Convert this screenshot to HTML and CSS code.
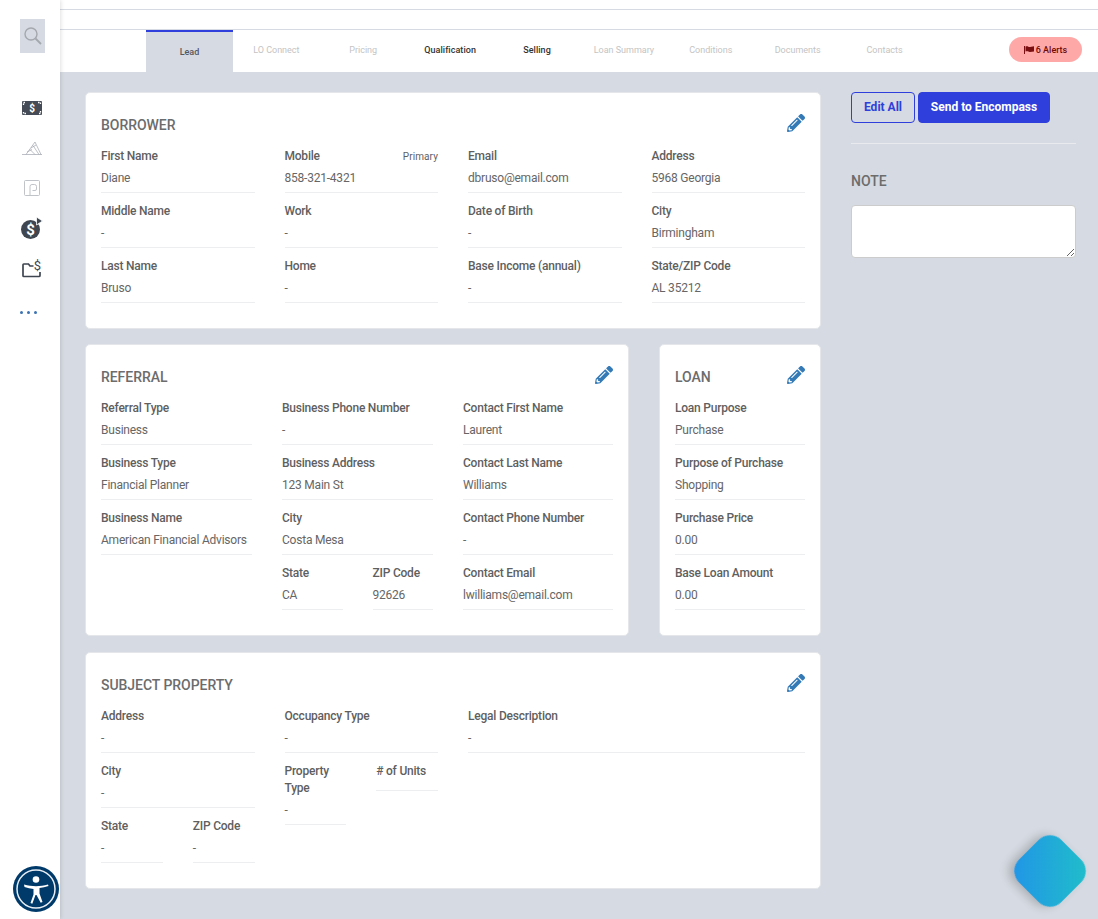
FILE: index.html
```html
<!DOCTYPE html>
<html lang="en">
<head>
<meta charset="utf-8">
<title>Lead</title>
<link rel="stylesheet" href="styles.css">
</head>
<body>
<svg class="defs" width="0" height="0" aria-hidden="true">
  <symbol id="pencil" viewBox="0 0 512 512"><path d="M497.9 142.1l-46.1 46.1c-4.7 4.7-12.3 4.7-17 0l-111-111c-4.7-4.7-4.7-12.3 0-17l46.1-46.1c18.7-18.7 49.1-18.7 67.9 0l60.1 60.1c18.8 18.7 18.8 49.1 0 67.9zM284.2 99.8L21.6 362.4.4 483.9c-2.9 16.4 11.4 30.6 27.8 27.8l121.5-21.3 262.6-262.6c4.7-4.7 4.7-12.3 0-17l-111-111c-4.8-4.7-12.4-4.7-17.1 0zM124.1 339.9c-5.5-5.5-5.5-14.3 0-19.8l154-154c5.5-5.5 14.3-5.5 19.8 0s5.5 14.3 0 19.8l-154 154c-5.5 5.5-14.3 5.5-19.8 0zM88 424h48v36.3l-64.5 11.3-31.1-31.1L51.7 376H88v48z"/></symbol>
</svg>
<div class="app">
  <aside class="sidebar">
    <div class="search">
      <svg width="18" height="18" viewBox="0 0 18 18" fill="none" stroke="#a4a8ae" stroke-width="1.4"><circle cx="7" cy="7" r="6"/><path d="M11.500 11.500l5.500 5.500" stroke-width="1.800"/></svg>
    </div>
    <div class="nav-icon">
      <svg width="20" height="14" viewBox="0 0 20 14"><rect width="20" height="14" rx="1" fill="#454c57"/><path d="M1.500 4V1.500H4M16 1.500h2.500V4M18.500 10v2.500H16M4 12.500H1.500V10" fill="none" stroke="#fff" stroke-width="1.300" stroke-dasharray="1.500 1"/><text x="10" y="10.800" text-anchor="middle" class="icon-text" fill="#fff" font-size="10">$</text></svg>
    </div>
    <div class="nav-icon">
      <svg width="20" height="14" viewBox="0 0 20 14" fill="none" stroke="#a0a5ad" stroke-width=".7"><path d="M0 13.500h20M4 13.500L13 1l6 12.500M8 8.500l5 5M11 4.500l6 9M5 11l5-2.500M9 7l5-3"/></svg>
    </div>
    <div class="nav-icon">
      <svg width="16" height="16" viewBox="0 0 16 16" fill="none" stroke="#b9bcc2" stroke-width=".9"><rect x=".5" y=".5" width="15" height="15" rx="1"/><path d="M6 15V6.500a2 2 0 0 1 2-2h2.500a2 2 0 0 1 2 2V9a1.500 1.500 0 0 1-1.500 1.500H8.500"/></svg>
    </div>
    <div class="nav-icon">
      <svg width="22" height="22" viewBox="0 0 22 22"><circle cx="9.500" cy="12.500" r="9.500" fill="#3f4650"/><path d="M15.500 0l6 4-6 4z" fill="#3f4650" stroke="#fff" stroke-width=".8"/><text x="9.500" y="17.500" text-anchor="middle" class="icon-text" fill="#fff" font-size="15">$</text></svg>
    </div>
    <div class="nav-icon">
      <svg width="20" height="19" viewBox="0 0 20 19" fill="none" stroke="#3f4650" stroke-width="1.700"><path d="M11.500 7H8L6.500 5H1.800a.8.800 0 0 0-.8.800v10.900c0 .4.400.8.800.8H17a1 1 0 0 0 1-1V13"/><text x="15.500" y="11" text-anchor="middle" class="icon-text thin" fill="#3f4650" stroke="none" font-size="13">$</text></svg>
    </div>
    <div class="nav-icon dots"><span></span><span></span><span></span></div>
  </aside>

  <div class="content">
    <div class="top-strip"></div>
    <div class="tabs">
      <a class="tab current">Lead</a>
      <a class="tab off">LO Connect</a>
      <a class="tab off">Pricing</a>
      <a class="tab on">Qualification</a>
      <a class="tab on">Selling</a>
      <a class="tab off">Loan Summary</a>
      <a class="tab off">Conditions</a>
      <a class="tab off">Documents</a>
      <a class="tab off">Contacts</a>
      <span class="alerts">
        <svg width="10" height="8" viewBox="0 0 10 8"><path d="M0 0h1v8H0zM1.500.500c2.500-.8 3 .8 4.500.5L10 .300v5.200l-4 .500c-1.500.2-2-1.200-4.500-.5z" fill="#7a0f12"/></svg>
        6 Alerts
      </span>
    </div>

    <main class="page">
      <div class="cards">
        <section class="card">
          <header class="card-head"><h2 class="title">BORROWER</h2><svg class="pencil"><use href="#pencil"/></svg></header>
          <div class="cols cols-4">
            <div>
              <div class="field"><div class="label">First Name</div><div class="value">Diane</div></div>
              <div class="field"><div class="label">Middle Name</div><div class="value">-</div></div>
              <div class="field"><div class="label">Last Name</div><div class="value">Bruso</div></div>
            </div>
            <div>
              <div class="field"><div class="label split">Mobile<span class="primary">Primary</span></div><div class="value">858-321-4321</div></div>
              <div class="field"><div class="label">Work</div><div class="value">-</div></div>
              <div class="field"><div class="label">Home</div><div class="value">-</div></div>
            </div>
            <div>
              <div class="field"><div class="label">Email</div><div class="value">dbruso@email.com</div></div>
              <div class="field"><div class="label">Date of Birth</div><div class="value">-</div></div>
              <div class="field"><div class="label">Base Income (annual)</div><div class="value">-</div></div>
            </div>
            <div>
              <div class="field"><div class="label">Address</div><div class="value">5968 Georgia</div></div>
              <div class="field"><div class="label">City</div><div class="value">Birmingham</div></div>
              <div class="field"><div class="label">State/ZIP Code</div><div class="value">AL 35212</div></div>
            </div>
          </div>
        </section>

        <div class="card-row">
          <section class="card">
            <header class="card-head"><h2 class="title">REFERRAL</h2><svg class="pencil"><use href="#pencil"/></svg></header>
            <div class="cols cols-3">
              <div>
                <div class="field"><div class="label">Referral Type</div><div class="value">Business</div></div>
                <div class="field"><div class="label">Business Type</div><div class="value">Financial Planner</div></div>
                <div class="field"><div class="label">Business Name</div><div class="value">American Financial Advisors</div></div>
              </div>
              <div>
                <div class="field"><div class="label">Business Phone Number</div><div class="value">-</div></div>
                <div class="field"><div class="label">Business Address</div><div class="value">123 Main St</div></div>
                <div class="field"><div class="label">City</div><div class="value">Costa Mesa</div></div>
                <div class="pair">
                  <div class="field"><div class="label">State</div><div class="value">CA</div></div>
                  <div class="field"><div class="label">ZIP Code</div><div class="value">92626</div></div>
                </div>
              </div>
              <div>
                <div class="field"><div class="label">Contact First Name</div><div class="value">Laurent</div></div>
                <div class="field"><div class="label">Contact Last Name</div><div class="value">Williams</div></div>
                <div class="field"><div class="label">Contact Phone Number</div><div class="value">-</div></div>
                <div class="field"><div class="label">Contact Email</div><div class="value">lwilliams@email.com</div></div>
              </div>
            </div>
          </section>
          <section class="card">
            <header class="card-head"><h2 class="title">LOAN</h2><svg class="pencil"><use href="#pencil"/></svg></header>
            <div class="field"><div class="label">Loan Purpose</div><div class="value">Purchase</div></div>
            <div class="field"><div class="label">Purpose of Purchase</div><div class="value">Shopping</div></div>
            <div class="field"><div class="label">Purchase Price</div><div class="value">0.00</div></div>
            <div class="field"><div class="label">Base Loan Amount</div><div class="value">0.00</div></div>
          </section>
        </div>

        <section class="card">
          <header class="card-head"><h2 class="title">SUBJECT PROPERTY</h2><svg class="pencil"><use href="#pencil"/></svg></header>
          <div class="cols cols-4">
            <div>
              <div class="field"><div class="label">Address</div><div class="value">-</div></div>
              <div class="field"><div class="label">City</div><div class="value">-</div></div>
              <div class="pair">
                <div class="field"><div class="label">State</div><div class="value">-</div></div>
                <div class="field"><div class="label">ZIP Code</div><div class="value">-</div></div>
              </div>
            </div>
            <div>
              <div class="field"><div class="label">Occupancy Type</div><div class="value">-</div></div>
              <div class="pair top">
                <div class="field"><div class="label">Property Type</div><div class="value">-</div></div>
                <div class="field"><div class="label"># of Units</div></div>
              </div>
            </div>
            <div class="span-2">
              <div class="field"><div class="label">Legal Description</div><div class="value">-</div></div>
            </div>
          </div>
        </section>
      </div>

      <aside class="side">
        <div class="actions">
          <button class="btn outline" type="button">Edit All</button>
          <button class="btn solid" type="button">Send to Encompass</button>
        </div>
        <hr class="rule">
        <h2 class="title">NOTE</h2>
        <textarea class="note"></textarea>
      </aside>
    </main>
  </div>
</div>

<div class="a11y">
  <svg width="46" height="46" viewBox="0 0 46 46"><circle cx="23" cy="23" r="23" fill="#003a6b"/><circle cx="23" cy="23" r="19" fill="none" stroke="#e8eef3" stroke-width="1.500"/><circle cx="23" cy="13.500" r="3.300" fill="#fff"/><path d="M11 18.500c4 1.200 8 1.700 12 1.700s8-.5 12-1.700l.5 1.600c-3 1-6 1.700-9 2v5.400l3 8.500-1.800.8L23.500 29h-1l-3.200 8.800-1.800-.8 3-8.500v-5.400c-3-.3-6-1-9-2z" fill="#fff"/></svg>
</div>
<div class="fab"></div>
</body>
</html>
```

FILE: styles.css
```css
* { box-sizing: border-box; }
html, body { margin: 0; height: 100%; }
body {
  font-family: Roboto, "Liberation Sans", sans-serif;
  font-size: 12px;
  color: #5e5e5e;
  background: #d6dae2;
  overflow: hidden;
}
.defs { position: absolute; }
.app { display: flex; min-height: 919px; }

.sidebar {
  width: 60px;
  flex: none;
  background: #fff;
  box-shadow: 1px 0 4px rgba(0, 0, 0, .12);
  padding-top: 19px;
  position: relative;
  z-index: 1;
}
.search {
  width: 25px;
  height: 34px;
  margin: 0 0 35px 20px;
  background: #d6dae2;
  display: flex;
  align-items: center;
  justify-content: center;
}
.nav-icon {
  height: 40px;
  display: flex;
  align-items: center;
  justify-content: center;
  padding-left: 4px;
}
.icon-text { font-family: Roboto, sans-serif; font-weight: 700; }
.icon-text.thin { font-weight: 400; }
.dots { gap: 4px; margin-top: 4px; padding-left: 0; padding-right: 4px; }
.dots span { width: 3px; height: 3px; border-radius: 50%; background: #3b73b3; }

.content { flex: 1; min-width: 0; }
.top-strip {
  height: 30px;
  background: #fff;
  border-bottom: 1px solid #d6dae2;
}
.top-strip::before {
  content: "";
  display: block;
  height: 9px;
  border-bottom: 1px solid #d6dae2;
}
.tabs {
  height: 42px;
  background: #fff;
  display: flex;
  padding: 0 16px 0 86px;
  align-items: flex-start;
}
.tab {
  width: 86.9px;
  height: 42px;
  padding-top: 14px;
  font-size: 9px;
  line-height: 12px;
  font-weight: 500;
  text-align: center;
}
.tab.off { color: #c4c4c4; font-weight: 400; }
.tab.on { color: #333; letter-spacing: .05px; }
.tab.current {
  background: #d6dae2;
  border-top: 2px solid #2f3fdc;
  color: #55585e;
}
.alerts {
  margin: 7px 0 0 auto;
  width: 73px;
  height: 25px;
  border-radius: 13px;
  background: #ffa8a8;
  color: #6d0b0b;
  font-size: 9px;
  font-weight: 500;
  display: flex;
  align-items: center;
  justify-content: center;
  gap: 2px;
}

.page {
  display: flex;
  gap: 30px;
  padding: 20px 22px 0 25px;
}
.cards {
  width: 736px;
  flex: none;
  display: flex;
  flex-direction: column;
  gap: 15px;
}
.card-row {
  display: grid;
  grid-template-columns: 544px 162px;
  gap: 30px;
  margin-bottom: 1px;
}
.card {
  background: #fff;
  border: 1px solid #e4e6ea;
  border-radius: 5px;
  padding: 23px 15px 15px;
}
.card-head {
  display: flex;
  justify-content: space-between;
  align-items: flex-start;
  margin-bottom: 13px;
  height: 19px;
}
.title {
  margin: 0;
  font-size: 14px;
  line-height: 19px;
  font-weight: 500;
  color: #6c6c6c;
  letter-spacing: -.05px;
}
.pencil { width: 18px; height: 18px; margin-top: -2px; fill: #337ab7; }

.cols { display: grid; gap: 30px; }
.cols-4 { grid-template-columns: repeat(4, minmax(0, 1fr)); }
.cols-3 { grid-template-columns: 151px 151px 150px; }
.span-2 { grid-column: span 2; }
.pair { display: grid; grid-template-columns: repeat(2, minmax(0, 1fr)); gap: 30px; }
.pair.top { align-items: start; }

.field {
  border-bottom: 1px solid #eceef0;
  padding-bottom: 5px;
  margin-bottom: 10px;
}
.label {
  font-weight: 500;
  line-height: 17px;
  margin-bottom: 5px;
  color: #5f5f5f;
  letter-spacing: -.22px;
}
.label.split { display: flex; justify-content: space-between; }
.primary { font-size: 10px; font-weight: 400; letter-spacing: .1px; }
.value { line-height: 17px; color: #666; letter-spacing: -.22px; }

.side { width: 225px; flex: none; }
.actions { display: flex; gap: 3px; }
.btn {
  font-family: inherit;
  font-size: 12px;
  font-weight: 700;
  height: 31px;
  padding: 0 0 2px;
  border-radius: 4px;
  border: 1px solid #2f3fdc;
}
.outline { width: 64px; background: transparent; color: #2f3fdc; }
.solid { width: 132px; background: #2f3fdc; color: #fff; }
.rule {
  border: 0;
  border-top: 1px solid #e8eaee;
  margin: 20px 0 28px;
}
.note {
  display: block;
  width: 100%;
  height: 53px;
  margin-top: 14px;
  background: #fff;
  border: 1px solid #ccc;
  border-radius: 4px;
}

.a11y { position: fixed; left: 13px; bottom: 7px; width: 46px; height: 46px; z-index: 2; }
.fab {
  position: fixed;
  right: 18px;
  bottom: 18px;
  width: 60px;
  height: 60px;
  border-radius: 16px;
  transform: rotate(45deg);
  background: linear-gradient(45deg, #2193e8, #20c0c8);
  box-shadow: -4px 4px 10px rgba(0, 0, 0, .2);
}
```
